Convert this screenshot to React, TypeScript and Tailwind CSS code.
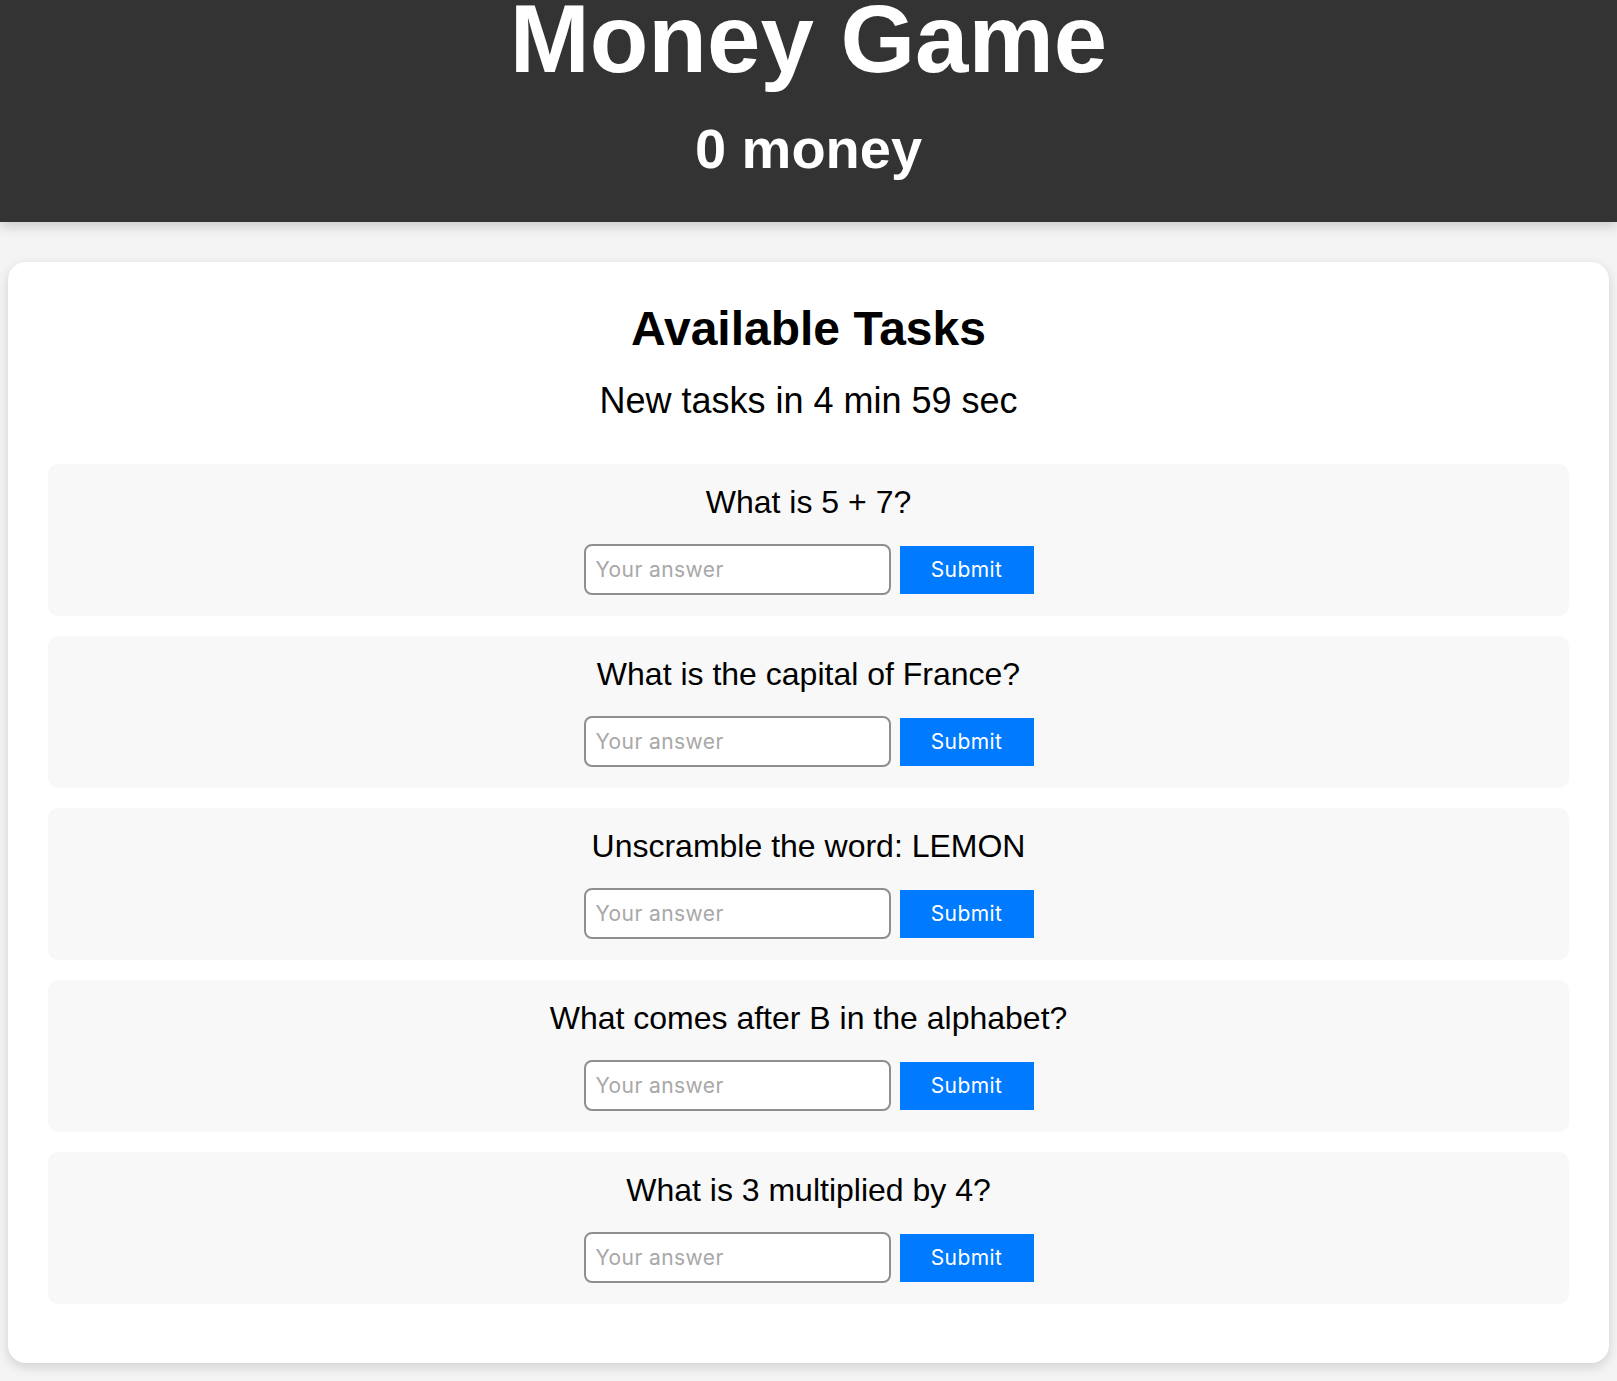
import React from "react";

const tasks = [
  "What is 5 + 7?",
  "What is the capital of France?",
  "Unscramble the word: LEMON",
  "What comes after B in the alphabet?",
  "What is 3 multiplied by 4?",
];

function TaskBox({ q }: { q: string }) {
  return (
    <div className="mb-[20px] rounded-[10px] bg-[#f8f8f8] pt-[20px] pb-[21px] text-center">
      <div className="text-[32px] leading-[37px] text-black">{q}</div>
      <div className="mt-[23px] flex items-center justify-center gap-[9px]">
        <input
          type="text"
          placeholder="Your answer"
          className="h-[51px] w-[307px] rounded-[8px] border-2 border-[#8f8f8f] bg-white px-[10px] text-[21px] tracking-[0.02em] text-black outline-none placeholder:text-[#a8a8a8]"
          style={{ fontFamily: "Inter, 'Noto Sans', sans-serif" }}
        />
        <button
          className="h-[48px] w-[134px] bg-[#007aff] text-[21px] tracking-[0.02em] text-white"
          style={{ fontFamily: "Inter, 'Noto Sans', sans-serif" }}
        >
          Submit
        </button>
      </div>
    </div>
  );
}

export default function App() {
  return (
    <div
      className="min-h-screen bg-[#f4f4f4] pb-[18px]"
      style={{ fontFamily: "'Liberation Sans', Arial, sans-serif" }}
    >
      <header className="relative z-10 bg-[#333333] pb-[41px] text-center text-white shadow-[0_4px_12px_rgba(0,0,0,0.18)]">
        <h1 className="-mt-[16px] text-[96px] font-bold leading-[110px]">Money Game</h1>
        <div className="mt-[23px] text-[56px] font-bold leading-[64px]">0 money</div>
      </header>
      <main className="mx-[8px] mt-[40px] rounded-[18px] bg-white px-[40px] pt-[40px] pb-[39px] shadow-[0_4px_12px_rgba(0,0,0,0.15)]">
        <h2 className="text-center text-[48px] font-bold leading-[54px] text-black">Available Tasks</h2>
        <p className="mt-[24px] text-center text-[36px] leading-[41px] text-black">New tasks in 4 min 59 sec</p>
        <div className="mt-[43px] flex flex-col">
          {tasks.map((t) => (
            <TaskBox key={t} q={t} />
          ))}
        </div>
      </main>
    </div>
  );
}
